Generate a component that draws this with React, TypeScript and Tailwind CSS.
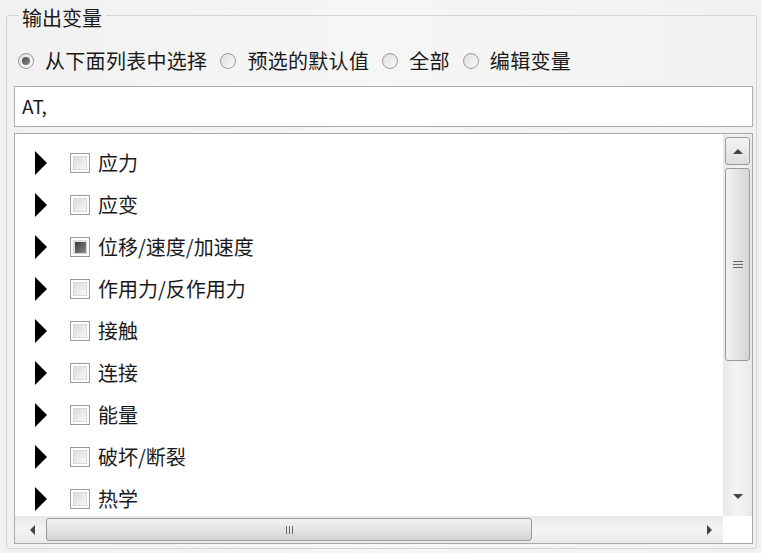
import React from 'react';

const font = { fontFamily: '"Microsoft YaHei", "Noto Sans CJK SC", "Noto Sans", sans-serif' };

const options = ['从下面列表中选择', '预选的默认值', '全部', '编辑变量'];

const groups: { label: string; partial?: boolean }[] = [
  { label: '应力' },
  { label: '应变' },
  { label: '位移/速度/加速度', partial: true },
  { label: '作用力/反作用力' },
  { label: '接触' },
  { label: '连接' },
  { label: '能量' },
  { label: '破坏/断裂' },
  { label: '热学' },
];

function Radio({ checked }: { checked?: boolean }) {
  return (
    <span className="flex h-[16px] w-[16px] items-center justify-center rounded-full border border-[#9a9a9a] bg-gradient-to-br from-[#dedede] to-[#fbfbfb]">
      {checked && <span className="h-[8px] w-[8px] rounded-full bg-gradient-to-br from-[#4a4a4a] to-[#8a8a8a]" />}
    </span>
  );
}

function Checkbox({ partial }: { partial?: boolean }) {
  return (
    <span className="flex h-[20px] w-[20px] items-center justify-center border border-[#9c9c9c] bg-white p-[2px]">
      <span className="flex h-full w-full items-center justify-center border border-[#d8d8d8] bg-gradient-to-br from-[#dcdcdc] to-[#f7f7f7]">
        {partial && <span className="h-[11px] w-[11px] bg-gradient-to-br from-[#3a3a3a] to-[#8c8c8c]" />}
      </span>
    </span>
  );
}

function Expander() {
  return (
    <svg width="14" height="24" viewBox="0 0 14 24">
      <polygon points="1,0 13,12 1,24" fill="#000" />
    </svg>
  );
}

function Arrow({ dir }: { dir: 'up' | 'down' | 'left' | 'right' }) {
  const pts = {
    up: '0,6 5,1 10,6',
    down: '0,1 10,1 5,6',
    left: '6,0 6,10 1,5',
    right: '1,0 1,10 6,5',
  }[dir];
  const vertical = dir === 'up' || dir === 'down';
  return (
    <svg width={vertical ? 10 : 7} height={vertical ? 7 : 10} viewBox={vertical ? '0 0 10 7' : '0 0 7 10'}>
      <polygon points={pts} fill="#444" />
    </svg>
  );
}

export default function App() {
  return (
    <div className="h-[553px] w-[761px] overflow-hidden bg-gradient-to-r from-[#f1f1f1] via-[#f6f6f6] to-[#f1f1f1] text-[#1a1a1a]" style={font}>
      <fieldset className="ml-[6px] mr-[4px] mt-[2px] h-[547px] rounded-[3px] border border-[#d3d3d3] pb-[4px] pl-[7px] pr-[3px]">
        <legend className="ml-[4px] px-[4px] pt-[6px] text-[20px] leading-[20px]">输出变量</legend>

        <div className="flex h-[51px] items-center pl-[4px] pt-[15px] text-[20px] tracking-[0.3px]">
          {options.map((o, i) => (
            <label key={o} className="mr-[13px] flex items-center gap-[11px]">
              <Radio checked={i === 0} />
              <span>{o}</span>
            </label>
          ))}
        </div>

        <div className="mt-[7px] flex h-[41px] items-center border border-[#abadb3] bg-white px-[7px] text-[19px]">
          AT,
        </div>

        <div className="mt-[6px] flex h-[411px] flex-col border border-[#a9a9a9] bg-white">
          <div className="flex min-h-0 flex-1">
            <div className="flex-1 overflow-hidden pt-[8px]">
              {groups.map((g) => (
                <div key={g.label} className="flex h-[42px] items-center pl-[19px]">
                  <Expander />
                  <span className="ml-[22px]">
                    <Checkbox partial={g.partial} />
                  </span>
                  <span className="ml-[8px] text-[20px] leading-none">{g.label}</span>
                </div>
              ))}
            </div>

            <div className="flex w-[29px] flex-col bg-gradient-to-r from-[#e9e9e9] via-[#f4f4f4] to-[#e9e9e9] px-[2px] pt-[3px]">
              <div className="flex h-[28px] items-center justify-center rounded-[3px] border border-[#9a9a9a] bg-gradient-to-b from-[#f4f4f4] to-[#dedede]">
                <Arrow dir="up" />
              </div>
              <div className="mt-[3px] flex h-[193px] items-center justify-center rounded-[3px] border border-[#9a9a9a] bg-gradient-to-r from-[#f2f2f2] via-[#e4e4e4] to-[#d4d4d4]">
                <div className="flex flex-col gap-[2px]">
                  <span className="h-[1px] w-[10px] bg-[#6a6a6a]" />
                  <span className="h-[1px] w-[10px] bg-[#6a6a6a]" />
                  <span className="h-[1px] w-[10px] bg-[#6a6a6a]" />
                </div>
              </div>
              <div className="flex-1" />
              <div className="mb-[6px] flex h-[28px] items-center justify-center">
                <Arrow dir="down" />
              </div>
            </div>
          </div>

          <div className="flex h-[27px]">
            <div className="flex flex-1 items-center bg-gradient-to-b from-[#e9e9e9] via-[#f4f4f4] to-[#e9e9e9] py-[2px] pl-[3px]">
              <div className="flex h-full w-[28px] items-center justify-center">
                <Arrow dir="left" />
              </div>
              <div className="flex h-full w-[486px] items-center justify-center rounded-[3px] border border-[#9a9a9a] bg-gradient-to-b from-[#f2f2f2] via-[#e4e4e4] to-[#d2d2d2]">
                <div className="flex gap-[2px]">
                  <span className="h-[8px] w-[1px] bg-[#6a6a6a]" />
                  <span className="h-[8px] w-[1px] bg-[#6a6a6a]" />
                  <span className="h-[8px] w-[1px] bg-[#6a6a6a]" />
                </div>
              </div>
              <div className="flex-1" />
              <div className="flex h-full w-[28px] items-center justify-center">
                <Arrow dir="right" />
              </div>
            </div>
            <div className="w-[29px] bg-white" />
          </div>
        </div>
      </fieldset>
    </div>
  );
}
